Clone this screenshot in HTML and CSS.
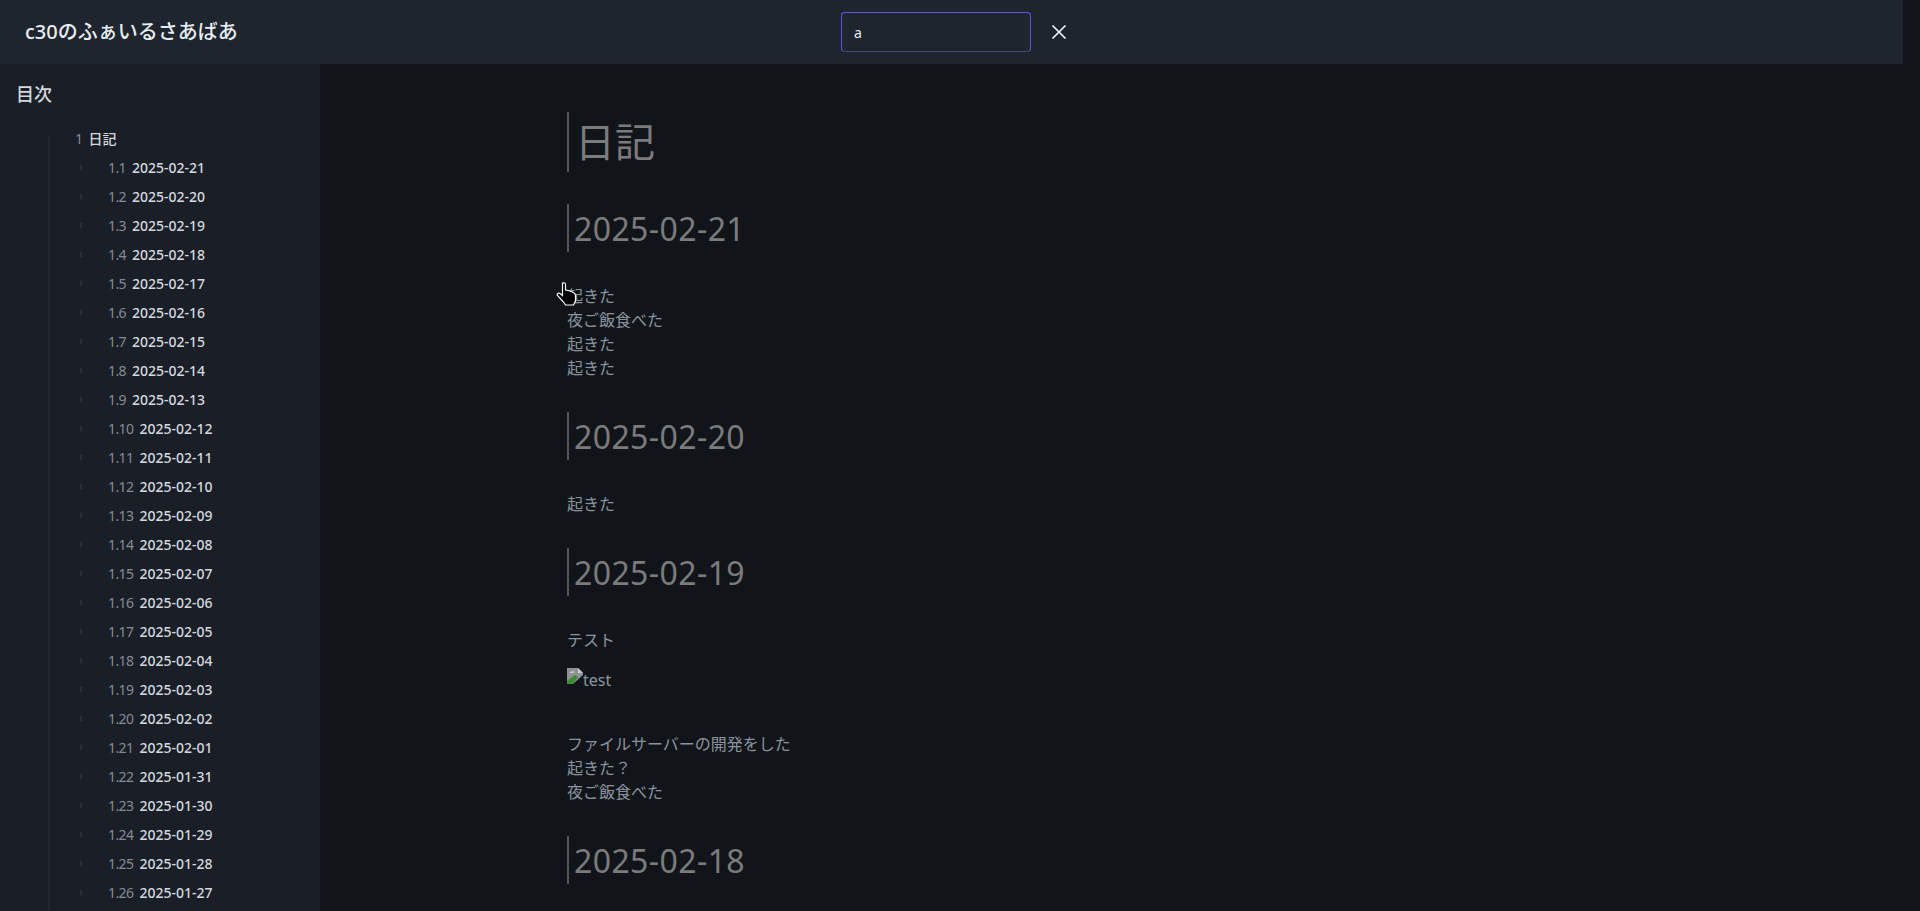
FILE: index.html
```html
<!DOCTYPE html>
<html lang="ja">
<head>
  <meta charset="UTF-8">
  <meta name="viewport" content="width=device-width, initial-scale=1.0">
  <title>c30のふぁいるさあばあ</title>
  <link rel="stylesheet" href="styles.css">
</head>
<body>
  <header class="topbar">
    <div class="site-title">c30のふぁいるさあばあ</div>
    <input class="search" type="text" value="a">
    <button class="close-btn" aria-label="close">
      <svg width="16" height="16" viewBox="0 0 16 16"><path d="M1.5 1.5 L14.5 14.5 M14.5 1.5 L1.5 14.5" stroke="#eef2f6" stroke-width="1.7" fill="none"/></svg>
    </button>
  </header>

  <div class="layout">
    <aside class="sidebar">
      <h3>目次</h3>
      <ol class="toc">
        <li class="toc-top"><span class="num">1</span><a>日記</a></li>
        <li><span class="num">1.1</span><a>2025-02-21</a></li>
        <li><span class="num">1.2</span><a>2025-02-20</a></li>
        <li><span class="num">1.3</span><a>2025-02-19</a></li>
        <li><span class="num">1.4</span><a>2025-02-18</a></li>
        <li><span class="num">1.5</span><a>2025-02-17</a></li>
        <li><span class="num">1.6</span><a>2025-02-16</a></li>
        <li><span class="num">1.7</span><a>2025-02-15</a></li>
        <li><span class="num">1.8</span><a>2025-02-14</a></li>
        <li><span class="num">1.9</span><a>2025-02-13</a></li>
        <li><span class="num">1.10</span><a>2025-02-12</a></li>
        <li><span class="num">1.11</span><a>2025-02-11</a></li>
        <li><span class="num">1.12</span><a>2025-02-10</a></li>
        <li><span class="num">1.13</span><a>2025-02-09</a></li>
        <li><span class="num">1.14</span><a>2025-02-08</a></li>
        <li><span class="num">1.15</span><a>2025-02-07</a></li>
        <li><span class="num">1.16</span><a>2025-02-06</a></li>
        <li><span class="num">1.17</span><a>2025-02-05</a></li>
        <li><span class="num">1.18</span><a>2025-02-04</a></li>
        <li><span class="num">1.19</span><a>2025-02-03</a></li>
        <li><span class="num">1.20</span><a>2025-02-02</a></li>
        <li><span class="num">1.21</span><a>2025-02-01</a></li>
        <li><span class="num">1.22</span><a>2025-01-31</a></li>
        <li><span class="num">1.23</span><a>2025-01-30</a></li>
        <li><span class="num">1.24</span><a>2025-01-29</a></li>
        <li><span class="num">1.25</span><a>2025-01-28</a></li>
        <li><span class="num">1.26</span><a>2025-01-27</a></li>
      </ol>
    </aside>

    <main class="content">
      <h1>日記</h1>

      <h2>2025-02-21</h2>
      <p>起きた<br>夜ご飯食べた<br>起きた<br>起きた</p>

      <h2>2025-02-20</h2>
      <p>起きた</p>

      <h2>2025-02-19</h2>
      <p>テスト</p>
      <p class="broken-img">
        <svg width="16" height="16" viewBox="0 0 16 16"><path d="M0 0 H11 L16 5 V7 L6 16 H0 Z" fill="#8f9295"/><path d="M11 0 L16 5 H11 Z" fill="#c9c9c9"/><path d="M0 16 V13 L8 7 L11 9 L6 16 Z" fill="#3f8a35"/><path d="M2 5 Q5 2 8 4 L6 5 Z" fill="#c9ced4"/></svg>test
      </p>
      <p>ファイルサーバーの開発をした<br>起きた？<br>夜ご飯食べた</p>

      <h2>2025-02-18</h2>
    </main>
  </div>

  <svg class="cursor" width="21" height="24" viewBox="0 0 21 24"><path d="M6.5 1 C8 0.5 9.5 1 9.5 2.5 V8 L12.5 8.5 L15 9.5 L17.5 10.5 Q19.5 11.5 19.5 13.5 V19 L17.5 23 H9.5 L7.5 20 L1.5 13.5 C0.5 11.5 2.5 10.5 4 11.5 L6.5 13.5 Z" fill="#000" stroke="#fff" stroke-width="1.2"/></svg>
</body>
</html>
```
FILE: styles.css
```css
html, body {
  height: 100%;
}
body {
  margin: 0;
  overflow: hidden;
  background: #11151a;
  color: #8b949e;
  font-family: "Noto Sans", "Noto Sans CJK JP", sans-serif;
  font-size: 16px;
  line-height: 24px;
}
.topbar {
  display: flex;
  align-items: center;
  height: 64px;
  width: 1903px;
  background: #1e252e;
}
.site-title {
  width: 816px;
  padding-left: 25px;
  color: #e8edf2;
  font-size: 20px;
  font-weight: 500;
}
.search {
  box-sizing: border-box;
  width: 190px;
  height: 40px;
  padding: 0 12px;
  border: 1px solid #5f57e8;
  border-bottom-color: #4a4880;
  border-radius: 4px;
  outline: none;
  background: #1e252e;
  color: #e8edf2;
  font-family: inherit;
  font-size: 14px;
}
.close-btn {
  display: flex;
  margin-left: 20px;
  padding: 0;
  border: none;
  background: none;
}
.layout {
  display: flex;
  height: 847px;
}
.sidebar {
  box-sizing: border-box;
  display: flex;
  flex-direction: column;
  width: 320px;
  padding: 16px 16px 0;
  overflow: hidden;
  background: #1a1e26;
}
.sidebar h3 {
  margin: 0;
  color: #d5d9de;
  font-size: 18px;
  font-weight: 500;
  line-height: 28px;
}
.toc {
  display: flex;
  flex-direction: column;
  flex: 1;
  margin: 28px 0 0 32px;
  padding: 0;
  border-left: 2px solid #22272f;
  list-style: none;
  font-size: 14px;
  color: #d5d9de;
}
.toc a {
  font-weight: 500;
}
.toc li {
  position: relative;
  display: flex;
  flex-shrink: 0;
  height: 29px;
  align-items: center;
  padding-left: 58px;
}
.toc li::before {
  content: "";
  position: absolute;
  left: 30px;
  top: 12px;
  width: 2px;
  height: 5px;
  background: #2a2f38;
}
.toc .toc-top {
  margin-top: -12px;
  padding-left: 25px;
}
.toc .toc-top::before {
  display: none;
}
.num {
  margin-right: 6px;
  color: #868c96;
  letter-spacing: -0.6px;
}
.content {
  flex: 1;
  padding: 48px 0 0 247px;
  overflow: hidden;
}
h1, h2 {
  margin: 32px 0;
  border-left: 2px solid #555;
  color: #7b7b7b;
  font-weight: 400;
}
h1 {
  margin-top: 0;
  padding-left: 6px;
  font-size: 40px;
  line-height: 60px;
}
h2 {
  padding: 2px 0 0 5px;
  font-size: 32px;
  line-height: 46px;
  letter-spacing: 0.4px;
}
.content p {
  margin: 16px 0;
}
.broken-img {
  height: 24px;
  margin-bottom: 40px !important;
}
.broken-img svg {
  vertical-align: top;
}
.cursor {
  position: absolute;
  left: 556px;
  top: 282px;
}
```
